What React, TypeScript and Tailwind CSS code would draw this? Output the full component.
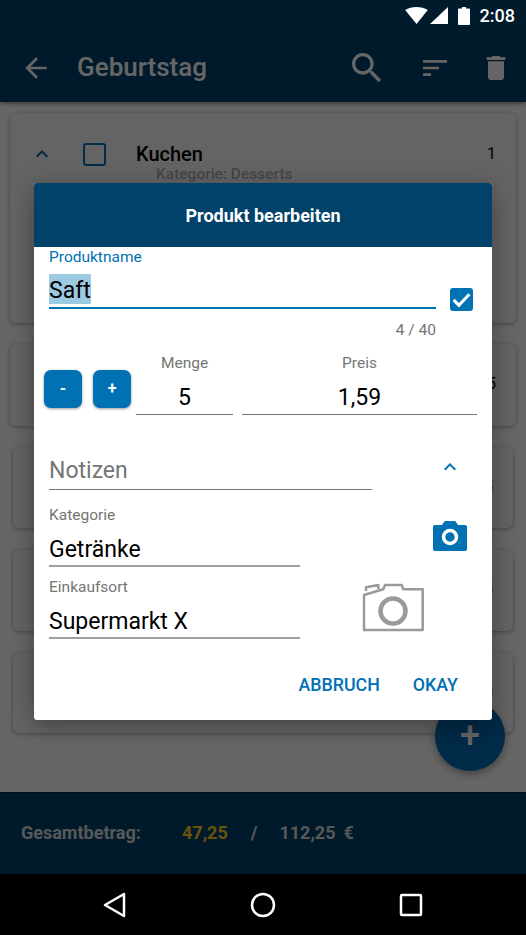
const FONT = "font-['Roboto',sans-serif]";

function MaterialIcon({ d, className }: { d: string; className: string }) {
  return (
    <svg viewBox="0 0 24 24" className={className} fill="currentColor">
      <path d={d} />
    </svg>
  );
}

const ICONS = {
  back: "M20 11H7.83l5.59-5.59L12 4l-8 8 8 8 1.41-1.41L7.83 13H20v-2z",
  search:
    "M15.5 14h-.79l-.28-.27C15.41 12.59 16 11.11 16 9.5 16 5.91 13.09 3 9.5 3S3 5.91 3 9.5 5.91 16 9.5 16c1.61 0 3.09-.59 4.23-1.57l.27.28v.79l5 4.99L20.49 19l-4.99-5zm-6 0C7.01 14 5 11.99 5 9.5S7.01 5 9.5 5 14 7.01 14 9.5 11.99 14 9.5 14z",
  sort: "M3 18h6v-2H3v2zM3 6v2h18V6H3zm0 7h12v-2H3v2z",
  trash: "M6 19c0 1.1.9 2 2 2h8c1.1 0 2-.9 2-2V7H6v12zM19 4h-3.5l-1-1h-5l-1 1H5v2h14V4z",
  chevronUp: "M7.41 15.41L12 10.83l4.59 4.58L18 14l-6-6-6 6z",
};

function StatusBar() {
  return (
    <div className="h-[34px] shrink-0 bg-[#001b2b] flex items-start pt-[7px] justify-end pr-[11px]">
      <svg viewBox="0 0 24 18" className="w-[23px] h-[17px] text-white" fill="currentColor">
        <path d="M12 18 0 3.2C3.4.9 7.5 0 12 0s8.6.9 12 3.2L12 18z" />
      </svg>
      <svg viewBox="0 0 18 17" className="w-[18px] h-[17px] ml-[2px] text-white" fill="currentColor">
        <path d="M18 0v17H0L18 0z" />
      </svg>
      <svg viewBox="0 0 12 18" className="w-[12px] h-[18px] ml-[10px] text-white" fill="currentColor">
        <path d="M4 0h4v1.500h3a1 1 0 0 1 1 1V17a1 1 0 0 1-1 1H1a1 1 0 0 1-1-1V2.500a1 1 0 0 1 1-1h3V0z" />
      </svg>
      <span className="ml-[10px] text-[18px] leading-[18px] font-medium text-white">2:08</span>
    </div>
  );
}

function Toolbar() {
  return (
    <div className="h-[68px] shrink-0 bg-[#00436b] text-white flex items-center shadow-[0_2px_4px_rgba(0,0,0,0.4)] z-10">
      <MaterialIcon d={ICONS.back} className="w-8 h-8 ml-5" />
      <span className="ml-[25px] text-[26px] leading-none font-medium -mt-[2px]">Geburtstag</span>
      <MaterialIcon d={ICONS.search} className="w-10 h-10 ml-auto" />
      <MaterialIcon d={ICONS.sort} className="w-8 h-8 ml-[32px]" />
      <MaterialIcon d={ICONS.trash} className="w-8 h-8 ml-[29px] mr-[14px]" />
    </div>
  );
}

function ItemCard({ digit, className }: { digit: string; className: string }) {
  return (
    <div className={`rounded-[6px] bg-[#fbfbfb] shadow-[0_1px_4px_rgba(0,0,0,0.35)] relative ${className}`}>
      <span className="absolute right-[20px] top-[30px] text-[16px] leading-5 text-black">{digit}</span>
    </div>
  );
}

function ProductList() {
  return (
    <div className="flex flex-col">
      <div className="mx-[10px] mt-[11px] h-[210px] rounded-[6px] bg-[#fbfbfb] shadow-[0_1px_4px_rgba(0,0,0,0.35)] pt-[29px] flex flex-col">
        <div className="flex items-center">
          <MaterialIcon d={ICONS.chevronUp} className="w-6 h-6 ml-5 text-[#00619c]" />
          <div className="w-[23px] h-[23px] ml-[29px] rounded-[3px] border-[2.5px] border-[#0071b3]" />
          <span className="ml-[30px] text-[20px] leading-6 font-medium text-black">Kuchen</span>
          <span className="ml-auto mr-[20px] text-[16px] leading-5 text-black">1</span>
        </div>
        <span className="ml-[146px] -mt-[2px] text-[15.5px] leading-5 font-medium text-[#b0b0b0]">Kategorie: Desserts</span>
      </div>
      <ItemCard digit="5" className="mx-[10px] mt-[21px] h-[82px]" />
      <ItemCard digit="5" className="mx-[13px] mt-[21px] h-[81px]" />
      <ItemCard digit="5" className="mx-[13px] mt-[22px] h-[81px]" />
      <ItemCard digit="0" className="mx-[13px] mt-[22px] h-[80px]" />
    </div>
  );
}

function Footer() {
  return (
    <div className="h-[82px] shrink-0 bg-[#00436b] border-t border-[#002a44] flex items-center pb-[2px] text-[18px] font-bold text-[#dcdcdc]">
      <span className="ml-[21px] w-[161px]">Gesamtbetrag:</span>
      <span className="text-[#ffd21f]">47,25</span>
      <span className="ml-[23px]">/</span>
      <span className="ml-[22px]">112,25</span>
      <span className="ml-[8px]">€</span>
    </div>
  );
}

function NavBar() {
  return (
    <div className="h-[61px] shrink-0 bg-black flex items-center text-white">
      <svg viewBox="0 0 24 26" className="w-6 h-[26px] ml-[103px]" fill="none" stroke="currentColor" strokeWidth="2.500" strokeLinejoin="round">
        <path d="M21 2v22L2 13z" />
      </svg>
      <svg viewBox="0 0 26 26" className="w-[26px] h-[26px] ml-[123px]" fill="none" stroke="currentColor" strokeWidth="2.500">
        <circle cx="13" cy="13" r="11" />
      </svg>
      <svg viewBox="0 0 24 24" className="w-6 h-6 ml-[123px]" fill="none" stroke="currentColor" strokeWidth="2.500" strokeLinejoin="round">
        <rect x="2" y="2" width="20" height="20" rx="1" />
      </svg>
    </div>
  );
}

function CenterField({ label, value, className }: { label: string; value: string; className: string }) {
  return (
    <div className={`flex flex-col items-center ${className}`}>
      <span className="text-[15.5px] leading-5 text-[#757575]">{label}</span>
      <span className="mt-[10px] w-full text-center text-[23px] leading-[29px] text-black border-b border-[#757575] h-[32px]">{value}</span>
    </div>
  );
}

function LabelField({ label, value }: { label: string; value: string }) {
  return (
    <div className="flex flex-col w-[251px]">
      <span className="text-[15.5px] leading-5 text-[#757575]">{label}</span>
      <span className="mt-[10px] text-[23px] leading-[30px] text-black border-b-2 border-[#a0a0a0] h-[32px]">{value}</span>
    </div>
  );
}

function StepButton({ label }: { label: string }) {
  return (
    <button className="w-[38px] h-[38px] rounded-[7px] bg-[#0071b3] text-white text-[16px] font-bold shadow-[0_1px_3px_rgba(0,0,0,0.4)]">
      {label}
    </button>
  );
}

function ProductDialog() {
  return (
    <div className="absolute left-[34px] top-[149px] w-[458px] h-[537px] rounded-[3px] bg-white overflow-hidden shadow-[0_6px_24px_rgba(0,0,0,0.35)] flex flex-col">
      <div className="h-[64px] shrink-0 bg-[#00426a] flex items-center justify-center text-[18px] font-bold text-white">
        Produkt bearbeiten
      </div>

      <div className="flex items-start pl-[15px]">
        <div className="w-[387px] flex flex-col">
          <span className="text-[15.5px] leading-5 text-[#0071b3]">Produktname</span>
          <div className="h-[33px] mt-[-1px] pt-[8px] border-b-2 border-[#0071b3] box-content">
            <span className="block w-fit bg-[#9ccae3] h-[30px] text-[23px] leading-[33px] text-black">Saft</span>
          </div>
          <span className="self-end mt-[11px] text-[15.5px] leading-5 text-[#757575]">4 / 40</span>
        </div>
        <div className="ml-[14px] mt-[41px] w-[23px] h-[23px] rounded-[3px] bg-[#0071b3] flex items-center justify-center">
          <svg viewBox="0 0 24 24" className="w-[21px] h-[21px] text-white" fill="none" stroke="currentColor" strokeWidth="3.500">
            <path d="M3 12.500l6 6L21 6" />
          </svg>
        </div>
      </div>

      <div className="flex items-end pl-[10px] mt-[13px]">
        <div className="flex gap-[11px] mb-[7px]">
          <StepButton label="-" />
          <StepButton label="+" />
        </div>
        <CenterField label="Menge" value="5" className="ml-[5px] w-[97px]" />
        <CenterField label="Preis" value="1,59" className="ml-[9px] w-[235px]" />
      </div>

      <div className="flex items-start pl-[15px] mt-[37px]">
        <span className="w-[323px] h-[38px] text-[23px] leading-[38px] text-[#757575] border-b border-[#757575]">Notizen</span>
        <MaterialIcon d={ICONS.chevronUp} className="w-6 h-6 ml-[66px] mt-[3px] text-[#0071b3]" />
      </div>

      <div className="flex pl-[15px] mt-[15px]">
        <div className="flex flex-col gap-[10px]">
          <LabelField label="Kategorie" value="Getränke" />
          <LabelField label="Einkaufsort" value="Supermarkt X" />
        </div>
        <div className="relative flex-1">
          <svg viewBox="0 0 34 30" className="absolute left-[133px] top-[16px] w-[34px] h-[30px]">
            <path fill="#0071b3" d="M2 4h7l2-3a2 2 0 0 1 1.500-1h9a2 2 0 0 1 1.500 1l2 3h7a2 2 0 0 1 2 2v22a2 2 0 0 1-2 2H2a2 2 0 0 1-2-2V6a2 2 0 0 1 2-2z" />
            <circle cx="17" cy="16" r="6.500" fill="none" stroke="#fff" strokeWidth="3.500" />
          </svg>
          <svg viewBox="0 0 64 50" className="absolute left-[61px] top-[78px] w-[64px] h-[50px]" fill="none" stroke="#9a9a9a" strokeWidth="2.500" strokeLinejoin="round">
            <path d="M3 12 22.300 6.300 24 2H40.700l1.600 4.300H61.700V47H3z" />
            <path d="M5 8V4.300L17.300 2v4" />
            <circle cx="32" cy="28" r="12.500" strokeWidth="4.500" />
          </svg>
        </div>
      </div>

      <div className="mt-[36px] flex justify-end gap-[33px] pr-[34px] text-[17.8px] leading-5 font-medium text-[#0071b3]">
        <span>ABBRUCH</span>
        <span>OKAY</span>
      </div>
    </div>
  );
}

export default function App() {
  return (
    <div className={`${FONT} w-[526px] h-[935px] flex flex-col overflow-hidden`}>
      <StatusBar />
      <div className="relative flex-1 flex flex-col min-h-0">
        <Toolbar />
        <div className="relative flex-1 bg-white min-h-0">
          <ProductList />
          <button className="absolute left-[435px] top-[599px] w-[70px] h-[70px] rounded-full bg-[#006db3] text-white text-[36px] font-medium shadow-[0_3px_8px_rgba(0,0,0,0.4)]">
            +
          </button>
        </div>
        <Footer />
        {/* scrim behind the dialog */}
        <div className="absolute inset-0 z-20 bg-black/60" />
        <div className="absolute inset-0 z-30">
          <ProductDialog />
        </div>
      </div>
      <NavBar />
    </div>
  );
}
